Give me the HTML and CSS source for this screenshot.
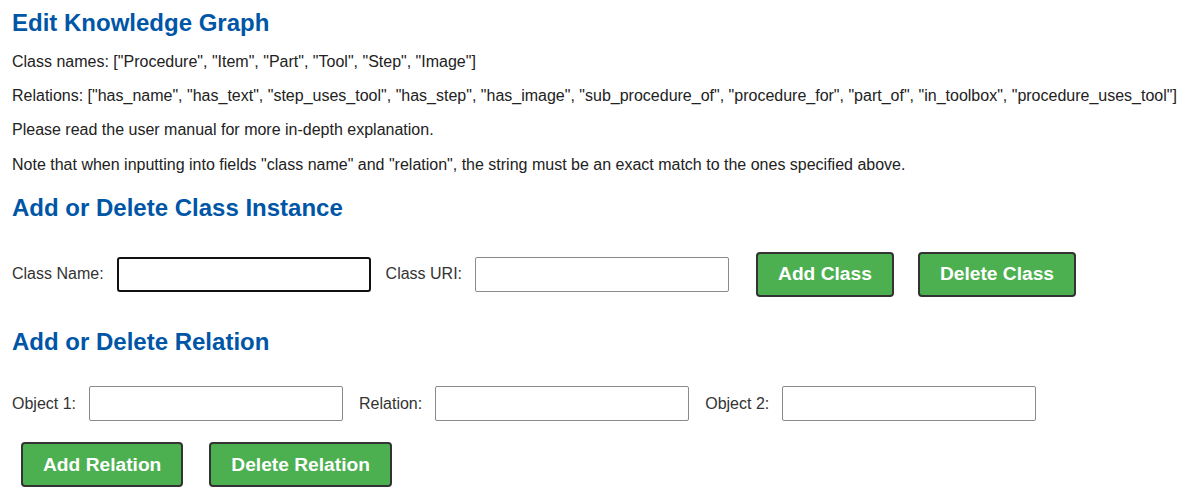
FILE: index.html
```html
<!DOCTYPE html>
<html>
<head>
<meta charset="utf-8">
<link rel="stylesheet" href="styles.css">
</head>
<body>
<h1 class="title">Edit Knowledge Graph</h1>
<p class="info">Class names: ["Procedure", "Item", "Part", "Tool", "Step", "Image"]</p>
<p class="info">Relations: ["has_name", "has_text", "step_uses_tool", "has_step", "has_image", "sub_procedure_of", "procedure_for", "part_of", "in_toolbox", "procedure_uses_tool"]</p>
<p class="info">Please read the user manual for more in-depth explanation.</p>
<p class="info">Note that when inputting into fields "class name" and "relation", the string must be an exact match to the ones specified above.</p>

<h2 class="section">Add or Delete Class Instance</h2>
<div class="row row-class">
  <label class="lbl">Class Name:</label>
  <input class="field focused" type="text">
  <label class="lbl">Class URI:</label>
  <input class="field" type="text">
  <button class="btn btn-first">Add Class</button>
  <button class="btn">Delete Class</button>
</div>

<h2 class="section section-rel">Add or Delete Relation</h2>
<div class="row row-rel">
  <label class="lbl">Object 1:</label>
  <input class="field" type="text">
  <label class="lbl">Relation:</label>
  <input class="field" type="text">
  <label class="lbl">Object 2:</label>
  <input class="field" type="text">
</div>
<div class="btn-row">
  <button class="btn">Add Relation</button>
  <button class="btn">Delete Relation</button>
</div>
</body>
</html>
```
FILE: styles.css
```css
html, body {
  margin: 0;
  background: #ffffff;
}
body {
  padding: 9px 12px 0 12px;
  font-family: "Liberation Sans", Arial, sans-serif;
  font-size: 16px;
  color: #333333;
}
.title {
  margin: 0 0 16px 0;
  font-size: 24px;
  font-weight: bold;
  line-height: 27.6px;
  color: #0056a6;
}
.info {
  margin: 16px 0;
  line-height: 18.4px;
  font-size: 16px;
  color: #222222;
}
.section {
  margin: 20px 0 0 0;
  font-size: 24px;
  font-weight: bold;
  line-height: 27.6px;
  color: #0056a6;
}
.section-rel {
  margin-top: 31px;
}
.row {
  display: flex;
  align-items: center;
}
.row-class {
  margin-top: 30px;
  height: 45px;
}
.row-rel {
  margin-top: 31px;
  height: 35px;
}
.lbl {
  margin-right: 13px;
  color: #333333;
  font-size: 16px;
}
.field {
  box-sizing: border-box;
  width: 254px;
  height: 35px;
  margin: 0 15px 0 0;
  padding: 0 6px;
  border: 1px solid #8a8a8a;
  border-radius: 2px;
  background: #ffffff;
  font-family: "Liberation Sans", Arial, sans-serif;
  font-size: 16px;
}
.field.focused {
  border: 2px solid #111111;
  border-radius: 3px;
}
.row-rel .field {
  margin-right: 16px;
}
.btn {
  box-sizing: border-box;
  height: 45px;
  padding: 0 20px;
  border: 2px solid #333333;
  border-radius: 4px;
  background: #4caf50;
  color: #ffffff;
  font-family: "Liberation Sans", Arial, sans-serif;
  font-size: 19.2px;
  font-weight: bold;
  margin-right: 24px;
}
.btn-first {
  margin-left: 12px;
}
.btn-row {
  display: flex;
  margin-top: 21px;
  padding-left: 9px;
}
.btn-row .btn {
  margin-right: 26px;
}
```
